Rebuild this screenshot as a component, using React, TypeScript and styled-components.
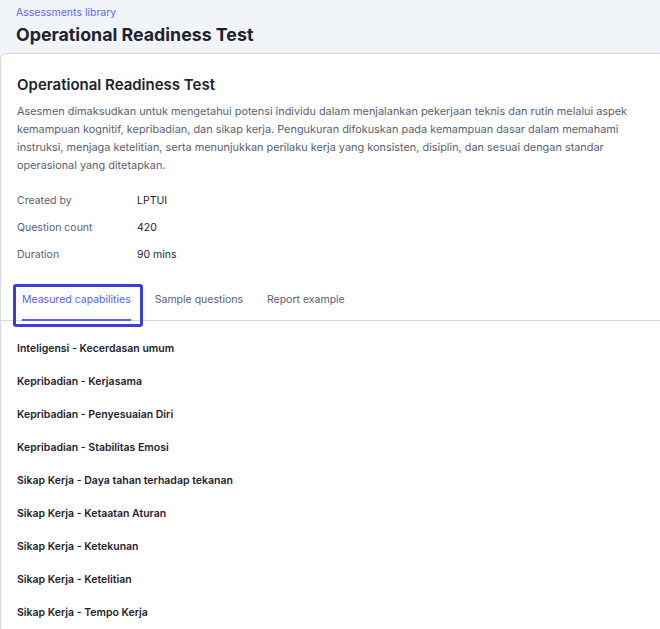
import React from "react";
import styled, { createGlobalStyle } from "styled-components";

const Global = createGlobalStyle`
  html, body { margin: 0; padding: 0; background: #ffffff; }
  body { font-family: Inter, "Noto Sans", sans-serif; color: #1f2937; -webkit-font-smoothing: antialiased; }
  * { box-sizing: border-box; }
`;

const Page = styled.div`
  display: flex;
  flex-direction: column;
  width: 660px;
  min-height: 629px;
  background: #f1f4f9;
  overflow: hidden;
`;

const Header = styled.header`
  display: flex;
  flex-direction: column;
  gap: 2px;
  padding: 5px 16px 5px 16px;
`;

const Crumb = styled.a`
  font-size: 10.5px;
  line-height: 15px;
  color: #6366f1;
  text-decoration: none;
`;

const PageTitle = styled.h1`
  margin: 0;
  font-size: 17.8px;
  line-height: 26px;
  font-weight: 700;
  color: #1e232e;
`;

const Card = styled.main`
  flex: 1;
  display: flex;
  flex-direction: column;
  background: #ffffff;
  border: 1px solid #d6dae3;
  border-right: none;
  border-bottom: none;
  border-top-left-radius: 6px;
  padding-top: 20px;
`;

const Intro = styled.section`
  display: flex;
  flex-direction: column;
  padding: 0 4px 0 16px;
`;

const CardTitle = styled.h2`
  margin: 0 0 6px 0;
  font-size: 15px;
  line-height: 22px;
  font-weight: 600;
  color: #1e232e;
`;

const Description = styled.p`
  margin: 0;
  font-size: 10.9px;
  line-height: 18px;
  color: #5b6170;
`;

const Meta = styled.dl`
  margin: 19px 0 0 0;
  display: grid;
  grid-template-columns: 120px 1fr;
  row-gap: 11px;
  font-size: 10.5px;
  line-height: 16px;
`;

const MetaLabel = styled.dt`
  color: #5b6170;
`;

const MetaValue = styled.dd`
  margin: 0;
  color: #1e232e;
`;

const TabBar = styled.nav`
  margin-top: 21px;
  display: flex;
  align-items: stretch;
  gap: 24px;
  padding-left: 21px;
  border-bottom: 1px solid #d3d8e0;
`;

const Tab = styled.button<{ $active?: boolean }>`
  position: relative;
  border: none;
  background: transparent;
  font-family: inherit;
  font-size: 10.5px;
  line-height: 16px;
  padding: 8px 0 12px 0;
  color: ${(p) => (p.$active ? "#5b5ff0" : "#5b6170")};
  cursor: pointer;
  &::after {
    content: "";
    position: absolute;
    left: 0;
    right: 0;
    bottom: -1px;
    height: 2px;
    background: ${(p) => (p.$active ? "#5b5ff0" : "transparent")};
  }
  &::before {
    content: "";
    display: ${(p) => (p.$active ? "block" : "none")};
    position: absolute;
    left: -9px;
    right: -12px;
    top: 0;
    bottom: -7px;
    border: 3px solid #3d3fd1;
    border-radius: 3px;
  }
`;

const List = styled.ul`
  list-style: none;
  margin: 0;
  padding: 20px 16px 0 16px;
  display: flex;
  flex-direction: column;
  gap: 17px;
`;

const Item = styled.li`
  font-size: 10.5px;
  line-height: 16px;
  font-weight: 600;
  color: #1e232e;
`;

const capabilities = [
  "Inteligensi - Kecerdasan umum",
  "Kepribadian - Kerjasama",
  "Kepribadian - Penyesuaian Diri",
  "Kepribadian - Stabilitas Emosi",
  "Sikap Kerja - Daya tahan terhadap tekanan",
  "Sikap Kerja - Ketaatan Aturan",
  "Sikap Kerja - Ketekunan",
  "Sikap Kerja - Ketelitian",
  "Sikap Kerja - Tempo Kerja",
];

const description =
  "Asesmen dimaksudkan untuk mengetahui potensi individu dalam menjalankan pekerjaan teknis dan rutin melalui aspek " +
  "kemampuan kognitif, kepribadian, dan sikap kerja. Pengukuran difokuskan pada kemampuan dasar dalam memahami instruksi, " +
  "menjaga ketelitian, serta menunjukkan perilaku kerja yang konsisten, disiplin, dan sesuai dengan standar operasional yang " +
  "ditetapkan.";

export default function App() {
  return (
    <>
      <Global />
      <Page>
        <Header>
          <Crumb href="#">Assessments library</Crumb>
          <PageTitle>Operational Readiness Test</PageTitle>
        </Header>
        <Card>
          <Intro>
            <CardTitle>Operational Readiness Test</CardTitle>
            <Description>{description}</Description>
            <Meta>
              <MetaLabel>Created by</MetaLabel>
              <MetaValue>LPTUI</MetaValue>
              <MetaLabel>Question count</MetaLabel>
              <MetaValue>420</MetaValue>
              <MetaLabel>Duration</MetaLabel>
              <MetaValue>90 mins</MetaValue>
            </Meta>
          </Intro>
          <TabBar>
            <Tab $active>Measured capabilities</Tab>
            <Tab>Sample questions</Tab>
            <Tab>Report example</Tab>
          </TabBar>
          <List>
            {capabilities.map((c) => (
              <Item key={c}>{c}</Item>
            ))}
          </List>
        </Card>
      </Page>
    </>
  );
}
